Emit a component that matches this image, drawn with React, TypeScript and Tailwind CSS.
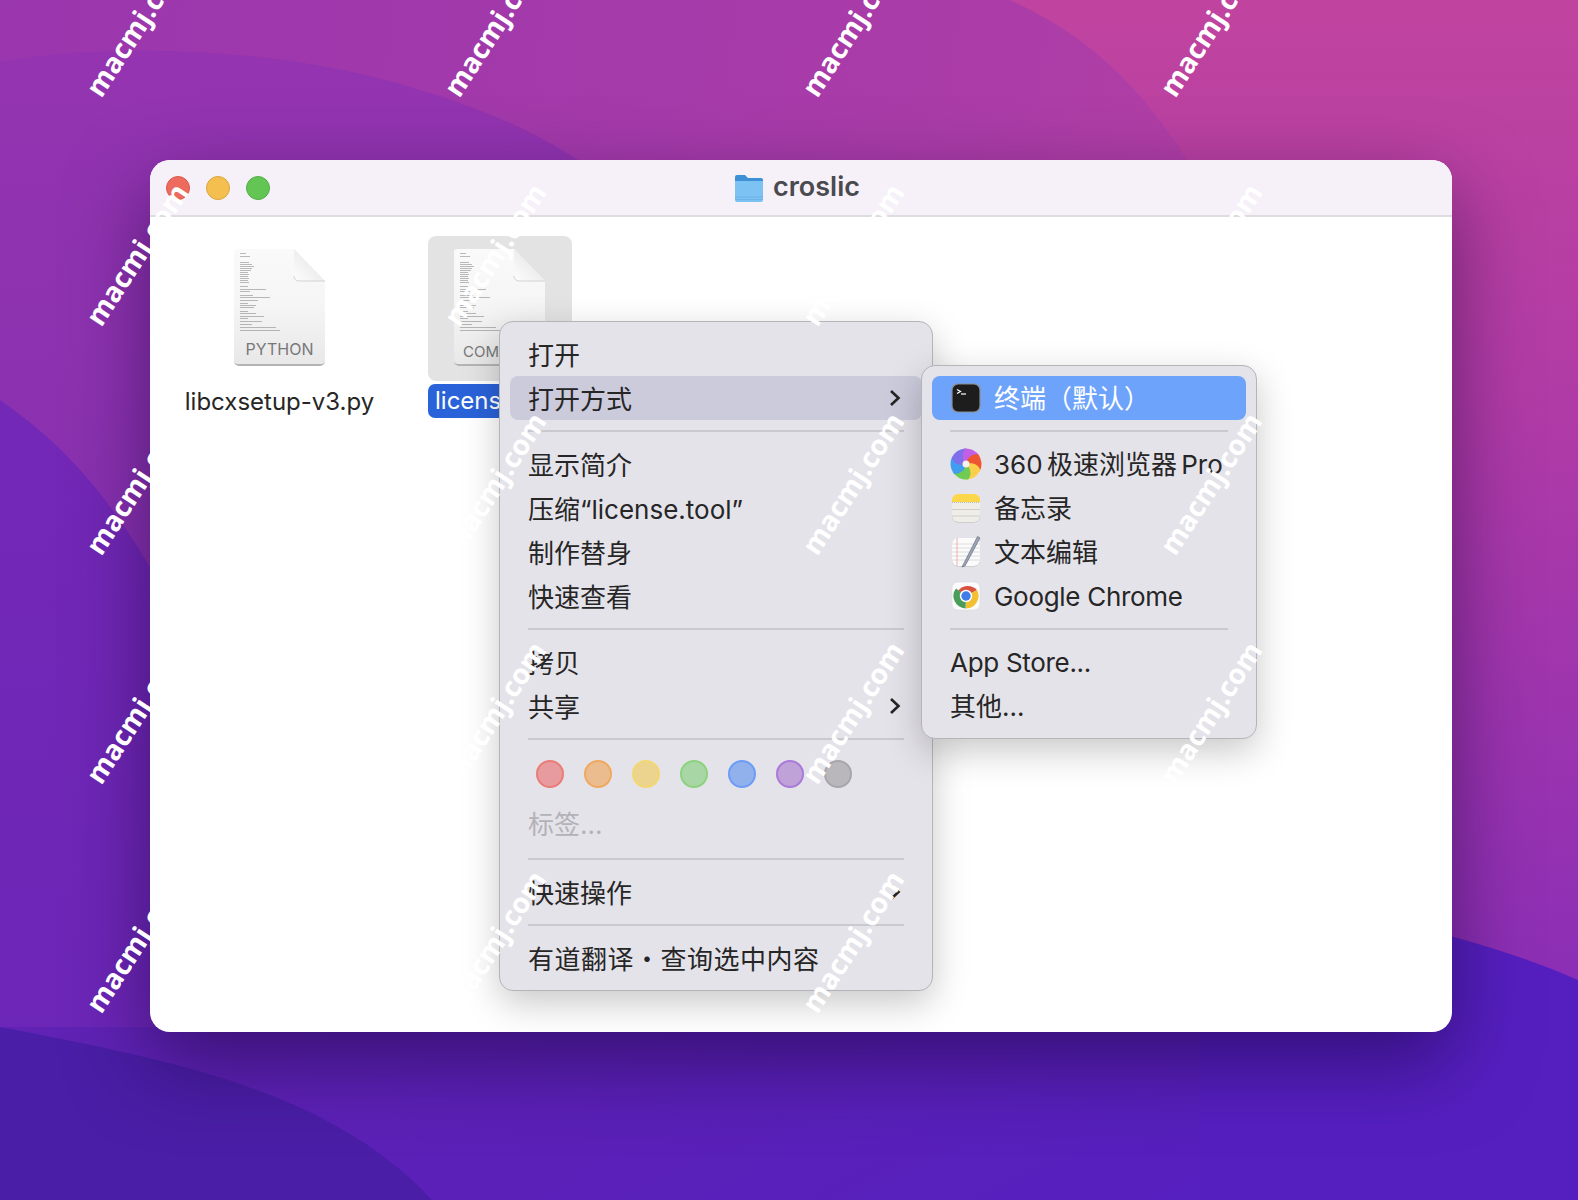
const sans = "font-['Inter','Noto_Sans_CJK_SC',sans-serif]";

const marks = [
  [85, 99], [443, 99], [801, 99], [1159, 99],
  [85, 328], [443, 328], [801, 328], [1159, 328],
  [85, 557], [443, 557], [801, 557], [1159, 557],
  [85, 786], [443, 786], [801, 786], [1159, 786],
  [85, 1015], [443, 1015], [801, 1015],
];

const codeLines = [
  [0, 6], [3, 10], [9, 9], [11, 12], [13, 14], [15, 12], [17, 11], [19, 8], [21, 9], [23, 8], [25, 9], [27, 8],
  [29, 9], [33, 8], [36, 26], [38, 10], [42, 13], [44, 30], [47, 18], [50, 8], [52, 16], [54, 14], [58, 8], [60, 16],
  [63, 24], [65, 8], [68, 22], [71, 12], [74, 36], [77, 40],
];

const blades = [
  { angle: 0, fill: "#c25fe6" },
  { angle: 60, fill: "#ee5531" },
  { angle: 120, fill: "#fccf4a" },
  { angle: 180, fill: "#6fcb52" },
  { angle: 240, fill: "#3f9ef0" },
  { angle: 300, fill: "#7f6fea" },
];

function Wallpaper() {
  return (
    <svg className="absolute inset-0" width="1578" height="1200" viewBox="0 0 1578 1200">
      <defs>
        <linearGradient id="top" x1="0" y1="0" x2="1" y2="0.1">
          <stop offset="0" stopColor="#9a36ae" />
          <stop offset="0.6" stopColor="#aa3ca8" />
          <stop offset="1" stopColor="#bc42a2" />
        </linearGradient>
        <linearGradient id="mid" x1="0" y1="0" x2="0" y2="1">
          <stop offset="0" stopColor="#9434b0" />
          <stop offset="0.55" stopColor="#8530b0" />
          <stop offset="1" stopColor="#7a2ab0" />
        </linearGradient>
        <linearGradient id="right" x1="0" y1="0" x2="0" y2="1">
          <stop offset="0" stopColor="#c0449f" />
          <stop offset="0.4" stopColor="#b13ba6" />
          <stop offset="1" stopColor="#8a2eb6" />
        </linearGradient>
        <linearGradient id="left" x1="0" y1="0" x2="0" y2="1">
          <stop offset="0" stopColor="#7428b6" />
          <stop offset="1" stopColor="#6a25b8" />
        </linearGradient>
        <linearGradient id="low" x1="0" y1="0" x2="1" y2="0.2">
          <stop offset="0" stopColor="#6023b4" />
          <stop offset="0.5" stopColor="#5a20b8" />
          <stop offset="1" stopColor="#551fc0" />
        </linearGradient>
      </defs>
      <rect width="1578" height="1200" fill="url(#top)" />
      <path d="M0 62C120 40 300 50 420 90C520 120 600 160 700 260L1300 1200H0Z" fill="url(#mid)" />
      <path d="M1010 0C1100 40 1170 110 1230 240L1300 1000H1578V0Z" fill="url(#right)" />
      <path d="M0 400C100 470 170 560 300 900L400 1200H0Z" fill="url(#left)" />
      <path d="M0 1027H1578V1200H0Z" fill="url(#low)" />
      <path d="M1200 900C1320 905 1450 925 1578 980V1200H1200Z" fill="#551fc0" />
      <path d="M0 1027C170 1060 330 1090 432 1200H0Z" fill="#4a1ea6" />
    </svg>
  );
}

function FolderIcon() {
  return (
    <svg width="30" height="30" viewBox="0 0 30 30">
      <path d="M1 4a2 2 0 0 1 2-2h8l3 3h13a2 2 0 0 1 2 2v3H1Z" fill="#3d8fd6" />
      <path d="M1 8h28v19a2 2 0 0 1-2 2H3a2 2 0 0 1-2-2Z" fill="#7cc2f3" />
      <path d="M1 24h28M1 26.500h28" stroke="#69afe3" strokeWidth="0.800" />
    </svg>
  );
}

function DocIcon({ label, small }: { label: string; small?: boolean }) {
  return (
    <div className="relative w-[94px] h-[120px]">
      <svg className="absolute inset-0" width="94" height="120" viewBox="0 0 94 120">
        <defs>
          <linearGradient id="paper" x1="0" y1="0" x2="0" y2="1">
            <stop offset="0" stopColor="#fafafa" />
            <stop offset="0.5" stopColor="#f5f5f5" />
            <stop offset="1" stopColor="#e8e8e8" />
          </linearGradient>
          <linearGradient id="fold" x1="0" y1="1" x2="1" y2="0">
            <stop offset="0" stopColor="#fdfdfd" />
            <stop offset="1" stopColor="#dfdfdf" />
          </linearGradient>
        </defs>
        <path d="M4 1H61L92 33V112a4 4 0 0 1-4 4H5a4 4 0 0 1-4-4V4a3 3 0 0 1 3-3Z" fill="url(#paper)" />
        <path d="M1 112a4 4 0 0 0 4 4H88a4 4 0 0 0 4-4v1a5 5 0 0 1-5 5H6a5 5 0 0 1-5-5Z" fill="#b4b4b4" />
        <path d="M61 1L92 33H66a5 5 0 0 1-5-5Z" fill="url(#fold)" />
        <path d="M92 33H66a5 5 0 0 1-5-5" fill="none" stroke="#d2d2d2" />
        {codeLines.map(([y, w]) => (
          <rect key={y} x="7" y={5 + y} width={w} height="1" fill="#6a6a6a" opacity="0.45" />
        ))}
      </svg>
      <span
        className={`absolute inset-x-0 text-[#787878] ${
          small ? "bottom-[5px] text-[15px] pl-[10px] text-left" : "bottom-[7px] text-center text-[16px]"
        } ${sans}`}
      >
        {label}
      </span>
    </div>
  );
}

function TerminalIcon() {
  return (
    <svg width="30" height="30" viewBox="0 0 30 30">
      <rect x="1" y="1" width="28" height="28" rx="6" fill="#1d1d1d" stroke="#8d8d8d" strokeWidth="1.200" />
      <path d="M6 6.500L9.500 8.500L6 10.500" fill="none" stroke="#fff" strokeWidth="1.200" />
      <path d="M10 11H15" stroke="#fff" strokeWidth="1.200" />
    </svg>
  );
}

function Browser360Icon() {
  return (
    <svg width="32" height="32" viewBox="0 0 32 32">
      {blades.map((b) => (
        <path
          key={b.angle}
          d="M16 16C11 12 10 5 14 0.600A15.500 15.500 0 0 1 29.400 8.200C24 6.500 18 10 16 16Z"
          fill={b.fill}
          transform={`rotate(${b.angle} 16 16)`}
        />
      ))}
      <circle cx="16" cy="16" r="3.500" fill="#f6f1ea" />
    </svg>
  );
}

function NotesIcon() {
  return (
    <svg width="30" height="30" viewBox="0 0 30 30">
      <rect x="1" y="1.500" width="28" height="28" rx="6" fill="#b9b7b2" />
      <rect x="1" y="1" width="28" height="28" rx="6" fill="#eeede8" />
      <path d="M1 9V7a6 6 0 0 1 6-6h16a6 6 0 0 1 6 6v2Z" fill="#fdd64a" />
      <path d="M1 9.500H29" stroke="#b8b6ae" strokeDasharray="1 1" />
      <path d="M1 16.500H29M1 23H29" stroke="#cfcdc6" />
    </svg>
  );
}

function TextEditIcon() {
  return (
    <svg width="32" height="32" viewBox="0 0 32 32">
      <rect x="2" y="2.500" width="28" height="28" rx="6" fill="#b9b9b9" />
      <rect x="2" y="2" width="28" height="28" rx="6" fill="#fbfbfb" />
      <path d="M2 8H30M2 12H30M2 16H30M2 20H30M2 24H30" stroke="#d6d6d6" strokeWidth="0.800" />
      <path d="M7 2V30" stroke="#f0a0a0" strokeWidth="0.800" />
      <path d="M27.500 0.500L30 2L15 30L12 31Z" fill="#9aa5b8" stroke="#5d6470" strokeWidth="0.600" />
    </svg>
  );
}

function ChromeIcon() {
  return (
    <svg width="30" height="30" viewBox="0 0 30 30">
      <rect x="1" y="1" width="28" height="28" rx="6" fill="#fbfbfb" stroke="#d4d4d4" strokeWidth="0.500" />
      <path d="M15 15L7.200 9.500A12.500 12.500 0 0 1 26 9Z" fill="#d9503f" />
      <path d="M15 15L26 9A12.500 12.500 0 0 1 14.500 27.500Z" fill="#f3c033" />
      <path d="M15 15L14.500 27.500A12.500 12.500 0 0 1 5 7.500Z" fill="#4a9d5b" />
      <circle cx="15" cy="15" r="6.200" fill="#fff" />
      <circle cx="15" cy="15" r="4.700" fill="#3f7ee8" />
    </svg>
  );
}

function Chevron() {
  return (
    <svg width="12" height="18" viewBox="0 0 12 18">
      <path d="M2 2L9.500 9L2 16" fill="none" stroke="#242424" strokeWidth="2.600" />
    </svg>
  );
}

function Sep() {
  return <div className="h-[2px] bg-[#cbc9d0] my-[10px] mx-[28px]" />;
}

function Item({
  label,
  arrow,
  active,
  muted,
  className = "",
}: {
  label: string;
  arrow?: boolean;
  active?: boolean;
  muted?: boolean;
  className?: string;
}) {
  return (
    <div
      className={`h-[44px] flex items-center justify-between mx-[10px] pl-[18px] pr-[21px] rounded-[8px] ${
        active ? "bg-[#cbcbdc]" : ""
      } ${muted ? "text-[#b3b2b7]" : "text-[#262626]"}`}
    >
      <span className={`pt-[2px] ${className}`}>{label}</span>
      {arrow && <Chevron />}
    </div>
  );
}

function ContextMenu() {
  const dots = [
    "bg-[#e89b9e] border-[#ea7c78]",
    "bg-[#eabc8e] border-[#efa960]",
    "bg-[#ecd48e] border-[#f2d772]",
    "bg-[#a9d6a5] border-[#8cd27f]",
    "bg-[#90b1ec] border-[#6d9cf7]",
    "bg-[#bea2d8] border-[#ab7ad8]",
    "bg-[#b9b7bc] border-[#a8a6ab]",
  ];
  return (
    <div className={`absolute left-[349px] top-[161px] w-[434px] h-[670px] pt-[10px] rounded-[14px] bg-[#e5e3ea] border border-[#b5b4b8] shadow-[0_12px_36px_rgba(0,0,0,0.22)] text-[26px] ${sans}`}>
      <Item label="打开" />
      <Item label="打开方式" arrow active />
      <Sep />
      <Item label="显示简介" />
      <Item label="压缩“license.tool”" />
      <Item label="制作替身" />
      <Item label="快速查看" />
      <Sep />
      <Item label="拷贝" />
      <Item label="共享" arrow />
      <Sep />
      <div className="flex gap-[20px] pl-[36px] mt-[20px] mb-[13px] h-[28px]">
        {dots.map((d) => (
          <div key={d} className={`w-[28px] h-[28px] rounded-full border-2 ${d}`} />
        ))}
      </div>
      <div className="mb-[13px]">
        <Item label="标签..." muted />
      </div>
      <div className="h-[2px] bg-[#cbc9d0] mb-[10px] mx-[28px]" />
      <Item label="快速操作" arrow />
      <Sep />
      <Item label="有道翻译・查询选中内容" className="tracking-[0.5px]" />
    </div>
  );
}

function SubItem({
  icon,
  label,
  active,
  className = "",
}: {
  icon?: React.ReactNode;
  label: string;
  active?: boolean;
  className?: string;
}) {
  return (
    <div
      className={`h-[44px] flex items-center mx-[10px] pl-[18px] rounded-[8px] ${
        active ? "bg-[#6ea3fb] text-white" : "text-[#262626]"
      }`}
    >
      {icon && <div className="w-[32px] h-[32px] mr-[12px] flex items-center justify-center">{icon}</div>}
      <span className={`whitespace-nowrap pt-[1px] ${className}`}>{label}</span>
    </div>
  );
}

function OpenWithMenu() {
  return (
    <div className={`absolute left-[771px] top-[205px] w-[336px] h-[374px] pt-[10px] rounded-[14px] bg-[#e5e3ea] border border-[#b5b4b8] shadow-[0_12px_36px_rgba(0,0,0,0.22)] text-[26px] ${sans}`}>
      <SubItem icon={<TerminalIcon />} label="终端（默认）" active />
      <Sep />
      <SubItem icon={<Browser360Icon />} label="360 极速浏览器 Pro" className="[word-spacing:-3px]" />
      <SubItem icon={<NotesIcon />} label="备忘录" />
      <SubItem icon={<TextEditIcon />} label="文本编辑" />
      <SubItem icon={<ChromeIcon />} label="Google Chrome" className="tracking-[-0.3px]" />
      <Sep />
      <SubItem label="App Store..." className="tracking-[-0.3px]" />
      <SubItem label="其他..." />
    </div>
  );
}

export default function App() {
  return (
    <div className="relative w-[1578px] h-[1200px] overflow-hidden bg-[#6a26bb] pt-[160px] pl-[150px]">
      <Wallpaper />
      <div className={`relative w-[1302px] h-[872px] rounded-[20px] bg-white overflow-hidden shadow-[0_30px_80px_rgba(20,0,50,0.5)] ${sans}`}>
        <div className="h-[57px] bg-[#f6f1f9] border-b-2 border-[#dedce0] flex items-center justify-center relative">
          <div className="absolute left-[16px] top-[16px] flex gap-[16px]">
            <div className="w-[24px] h-[24px] rounded-full bg-[#ec6a5e] border border-[#d9584d]" />
            <div className="w-[24px] h-[24px] rounded-full bg-[#f4bf4f] border border-[#dba53c]" />
            <div className="w-[24px] h-[24px] rounded-full bg-[#62c554] border border-[#52ad45]" />
          </div>
          <div className="flex items-center gap-[9px] pr-[8px] text-[#4a4a4e] text-[27px] font-semibold">
            <FolderIcon />
            <span>croslic</span>
          </div>
        </div>

        <div className="flex pt-[19px] text-[24px] text-[#262626]">
          <div className="w-[259px] flex flex-col items-center">
            <div className="h-[145px] pt-[12px] flex justify-center">
              <DocIcon label="PYTHON" />
            </div>
            <span className="mt-[4px] leading-[34px]">libcxsetup-v3.py</span>
          </div>
          <div className="w-[144px] ml-[19px] flex flex-col">
            <div className="h-[145px] pt-[12px] rounded-[8px] bg-[#e3e3e3] flex justify-center">
              <DocIcon label="COMMAND" small />
            </div>
            <span className="mt-[3px] h-[34px] leading-[34px] w-[90px] pl-[7px] rounded-[7px] bg-[#2a62d9] text-white overflow-hidden">license.tool</span>
          </div>
        </div>

        <ContextMenu />
        <OpenWithMenu />
      </div>

      {marks.map(([x, y]) => (
        <span
          key={`${x}-${y}`}
          className="absolute origin-left -rotate-[57deg] text-white text-[28px] font-bold font-['Open_Sans',sans-serif] leading-none whitespace-nowrap -translate-y-1/2"
          style={{ left: x + 7, top: y - 6 }}
        >
          macmj.com
        </span>
      ))}
    </div>
  );
}
